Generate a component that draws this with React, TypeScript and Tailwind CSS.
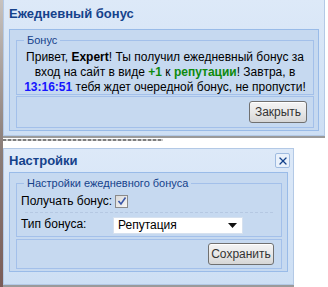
import { X } from "lucide-react";

const font = "font-['Tahoma','Liberation_Sans',sans-serif]";

function Btn({ label, w }: { label: string; w: string }) {
  return (
    <button
      type="button"
      className={`${w} h-[22px] rounded-[3px] border border-[#707070] bg-gradient-to-b from-[#f4f4f4] via-[#e8e8e8] to-[#d6d6d6] text-[12px] leading-none text-[#333] shadow-[inset_0_1px_0_#fff]`}
    >
      {label}
    </button>
  );
}

export default function App() {
  return (
    <div className={`w-[328px] h-[287px] bg-white overflow-hidden flex ${font}`}>
      <div className="w-[3px] h-full shrink-0 bg-gradient-to-b from-[#c7c2bf] via-[#8c7f7a] to-[#7a5c58]" />
      <div className="flex flex-col">
        {/* daily bonus window */}
        <div className="w-[322px] h-[136px] border border-t-0 border-[#b3c9e6] bg-gradient-to-b from-[#dde9f8] to-[#cddff4] shadow-[0_2px_0_#9a9a9a] flex flex-col">
          <div className="h-[29px] shrink-0 flex items-center pl-[5px] pb-[1px]">
            <span className="text-[13px] font-bold text-[#15428b]">Ежедневный бонус</span>
          </div>
          <div className="mx-[5px] h-[102px] border border-[#99bbe8] bg-[#c6d9f0] pl-[6px] pr-[4px]">
            <fieldset className="h-[61px] border border-[#a3c0ea] px-[4px] mt-[4px]">
              <legend className="ml-[3px] px-[3px] text-[11px] leading-[13px] text-[#15428b]">Бонус</legend>
              <p className="pt-[3px] text-center text-[12px] leading-[15px] text-black">
                Привет, <b>Expert</b>! Ты получил ежедневный бонус за вход на сайт в виде{" "}
                <b className="text-[#0d8a0d]">+1</b> к <b className="text-[#0d8a0d]">репутации</b>! Завтра, в{" "}
                <b className="text-[#1515ff]">13:16:51</b> тебя ждет очередной бонус, не пропусти!
              </p>
            </fieldset>
            <div className="mt-[1px] h-[32px] border border-[#a3c0ea] flex items-center justify-end pr-[6px]">
              <Btn label="Закрыть" w="w-[58px]" />
            </div>
          </div>
        </div>

        <div className="h-[12px] shrink-0 flex items-start">
          <div className="mt-[3px] w-[160px] h-[2px] bg-[repeating-linear-gradient(90deg,#7d7d7d_0_3px,#c8c8c8_3px_5px)]" />
        </div>

        {/* settings window */}
        <div className="w-[291px] h-[137px] border border-[#b3c9e6] bg-gradient-to-b from-[#dde9f8] to-[#cddff4] shadow-[0_2px_0_#9a9a9a] flex flex-col">
          <div className="h-[23px] shrink-0 flex items-center justify-between pl-[5px] pr-[3px]">
            <span className="text-[13px] font-bold text-[#15428b]">Настройки</span>
            <span className="w-[15px] h-[15px] border border-[#9fbbe0] bg-[#e9f1fb] rounded-[2px] flex items-center justify-center">
              <X className="w-[12px] h-[12px] text-[#15428b]" strokeWidth={2.5} />
            </span>
          </div>
          <div className="mx-[5px] h-[100px] border border-[#99bbe8] bg-[#c6d9f0] pl-[6px] pr-[5px]">
            <fieldset className="h-[60px] border border-[#a3c0ea] px-[4px] mt-[4px]">
              <legend className="ml-[3px] px-[3px] text-[11px] leading-[13px] text-[#15428b]">
                Настройки ежедневного бонуса
              </legend>
              <div className="mt-[2px] flex items-center h-[18px] text-[12px] text-black">
                <span className="w-[94px]">Получать бонус:</span>
                <span className="w-[13px] h-[13px] border border-[#8a8a8a] bg-gradient-to-br from-[#d9d9d9] to-[#f6f6f6] flex items-center justify-center">
                  <svg width="10" height="10" viewBox="0 0 10 10">
                    <path d="M1.5 5 L4 8 L8.5 1.5" fill="none" stroke="#3a57a8" strokeWidth="1.6" />
                  </svg>
                </span>
              </div>
              <div className="mx-[4px] mt-[2px] mb-[3px] border-t border-dashed border-[#b5c8e2]" />
              <div className="flex items-center h-[18px] text-[12px] text-black">
                <span className="w-[92px] -mt-[3px]">Тип бонуса:</span>
                <span className="w-[130px] h-[17px] bg-white border border-[#d6e1ef] flex items-center justify-between pl-[4px] pr-[5px]">
                  <span>Репутация</span>
                  <svg width="9" height="5" viewBox="0 0 9 5">
                    <path d="M0 0 H9 L4.5 5 Z" fill="#111" />
                  </svg>
                </span>
              </div>
            </fieldset>
            <div className="mt-[2px] h-[30px] border border-[#a3c0ea] flex items-center justify-end pr-[7px]">
              <Btn label="Сохранить" w="w-[66px]" />
            </div>
          </div>
        </div>
      </div>
    </div>
  );
}
